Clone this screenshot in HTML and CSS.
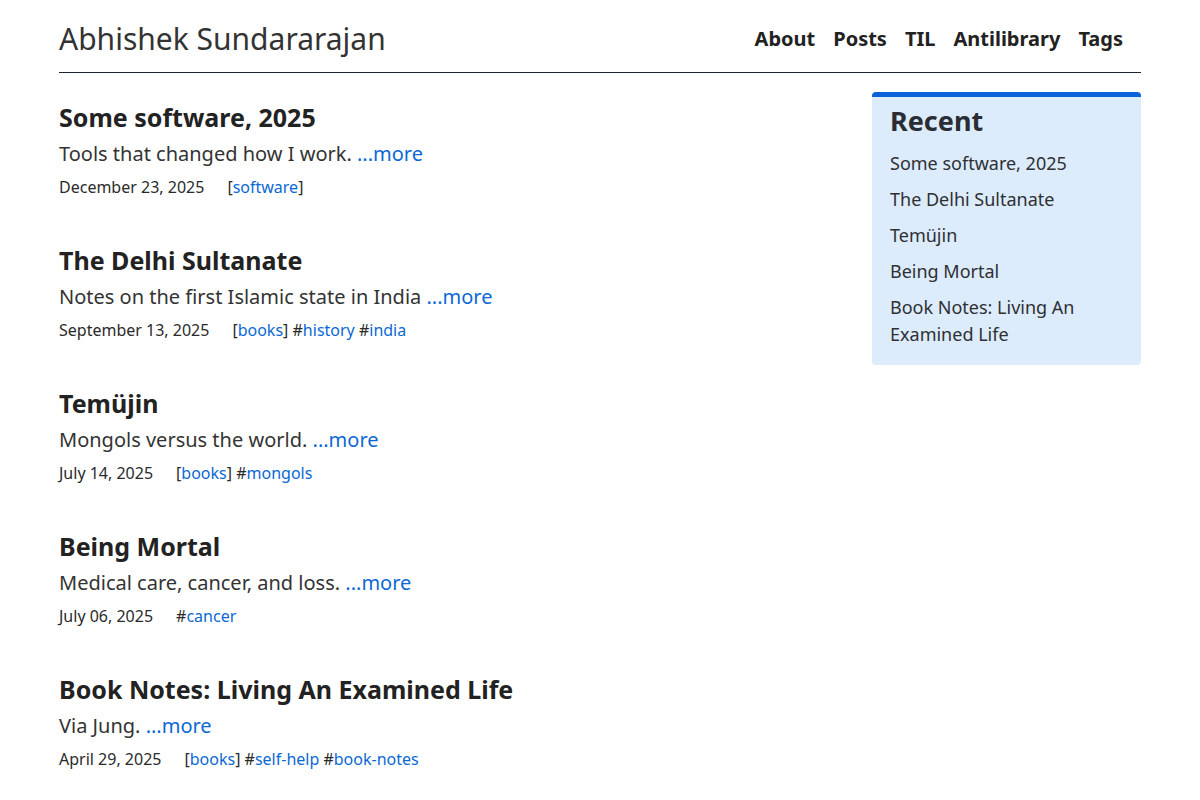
FILE: index.html
```html
<!DOCTYPE html>
<html lang="en">
<head>
<meta charset="utf-8">
<title>Abhishek Sundararajan</title>
<link rel="stylesheet" href="styles.css">
</head>
<body>
<div class="container">
  <header class="site-header">
    <a class="site-title" href="#">Abhishek Sundararajan</a>
    <nav class="site-nav">
      <a href="#">About</a>
      <a href="#">Posts</a>
      <a href="#">TIL</a>
      <a href="#">Antilibrary</a>
      <a href="#">Tags</a>
    </nav>
  </header>
  <div class="layout">
    <main class="posts">
      <article class="post">
        <h2 class="post-title">Some software, 2025</h2>
        <p class="post-desc">Tools that changed how I work. <a href="#">...more</a></p>
        <div class="post-meta"><span class="date">December 23, 2025</span><span class="tags">[<a href="#">software</a>]</span></div>
      </article>
      <article class="post">
        <h2 class="post-title">The Delhi Sultanate</h2>
        <p class="post-desc">Notes on the first Islamic state in India <a href="#">...more</a></p>
        <div class="post-meta"><span class="date">September 13, 2025</span><span class="tags">[<a href="#">books</a>] #<a href="#">history</a> #<a href="#">india</a></span></div>
      </article>
      <article class="post">
        <h2 class="post-title">Temüjin</h2>
        <p class="post-desc">Mongols versus the world. <a href="#">...more</a></p>
        <div class="post-meta"><span class="date">July 14, 2025</span><span class="tags">[<a href="#">books</a>] #<a href="#">mongols</a></span></div>
      </article>
      <article class="post">
        <h2 class="post-title">Being Mortal</h2>
        <p class="post-desc">Medical care, cancer, and loss. <a href="#">...more</a></p>
        <div class="post-meta"><span class="date">July 06, 2025</span><span class="tags">#<a href="#">cancer</a></span></div>
      </article>
      <article class="post">
        <h2 class="post-title">Book Notes: Living An Examined Life</h2>
        <p class="post-desc">Via Jung. <a href="#">...more</a></p>
        <div class="post-meta"><span class="date">April 29, 2025</span><span class="tags">[<a href="#">books</a>] #<a href="#">self-help</a> #<a href="#">book-notes</a></span></div>
      </article>
    </main>
    <aside class="sidebar">
      <h3 class="sidebar-title">Recent</h3>
      <ul class="recent-list">
        <li><a href="#">Some software, 2025</a></li>
        <li><a href="#">The Delhi Sultanate</a></li>
        <li><a href="#">Temüjin</a></li>
        <li><a href="#">Being Mortal</a></li>
        <li><a href="#">Book Notes: Living An Examined Life</a></li>
      </ul>
    </aside>
  </div>
</div>
</body>
</html>
```

FILE: styles.css
```css
* { box-sizing: border-box; }
html, body { margin: 0; padding: 0; background: #fff; }
body {
  font-family: "Noto Sans", "Open Sans", sans-serif;
  color: #2a2a2a;
}
a { text-decoration: none; color: #0b68d4; }

.container {
  width: 1082px;
  margin: 0 auto;
}

.site-header {
  height: 73px;
  border-bottom: 1px solid #1b2530;
  display: flex;
  align-items: center;
  justify-content: space-between;
  padding-top: 5px;
}
.site-title {
  font-size: 30px;
  font-weight: 400;
  color: #333;
}
.site-nav {
  display: flex;
  gap: 18px;
  padding-right: 18px;
}
.site-nav a {
  font-size: 20px;
  font-weight: 700;
  color: #222;
}

.layout {
  display: flex;
  justify-content: space-between;
  align-items: flex-start;
}

.posts {
  padding-top: 29px;
}
.post { margin-bottom: 46px; }
.post-title {
  margin: 0 0 7px;
  font-size: 25px;
  line-height: 30px;
  font-weight: 700;
  color: #222;
}
.post-desc {
  margin: 0 0 6px;
  font-size: 20px;
  line-height: 30px;
  color: #333;
}
.post-meta {
  font-size: 16px;
  line-height: 24px;
  color: #2a2a2a;
}
.post-meta .date { margin-right: 23px; }

.sidebar {
  width: 269px;
  margin-top: 19px;
  background: #ddecfc;
  border-top: 5px solid #0a63d9;
  border-radius: 4px;
  padding: 8px 18px 17px;
}
.sidebar-title {
  margin: 0 0 13px;
  font-size: 27px;
  line-height: 32px;
  font-weight: 700;
  color: #2a2d33;
}
.recent-list {
  list-style: none;
  margin: 0;
  padding: 0;
  display: flex;
  flex-direction: column;
  gap: 9px;
}
.recent-list li { font-size: 18px; line-height: 27px; }
.recent-list a { color: #2e3033; }
```
